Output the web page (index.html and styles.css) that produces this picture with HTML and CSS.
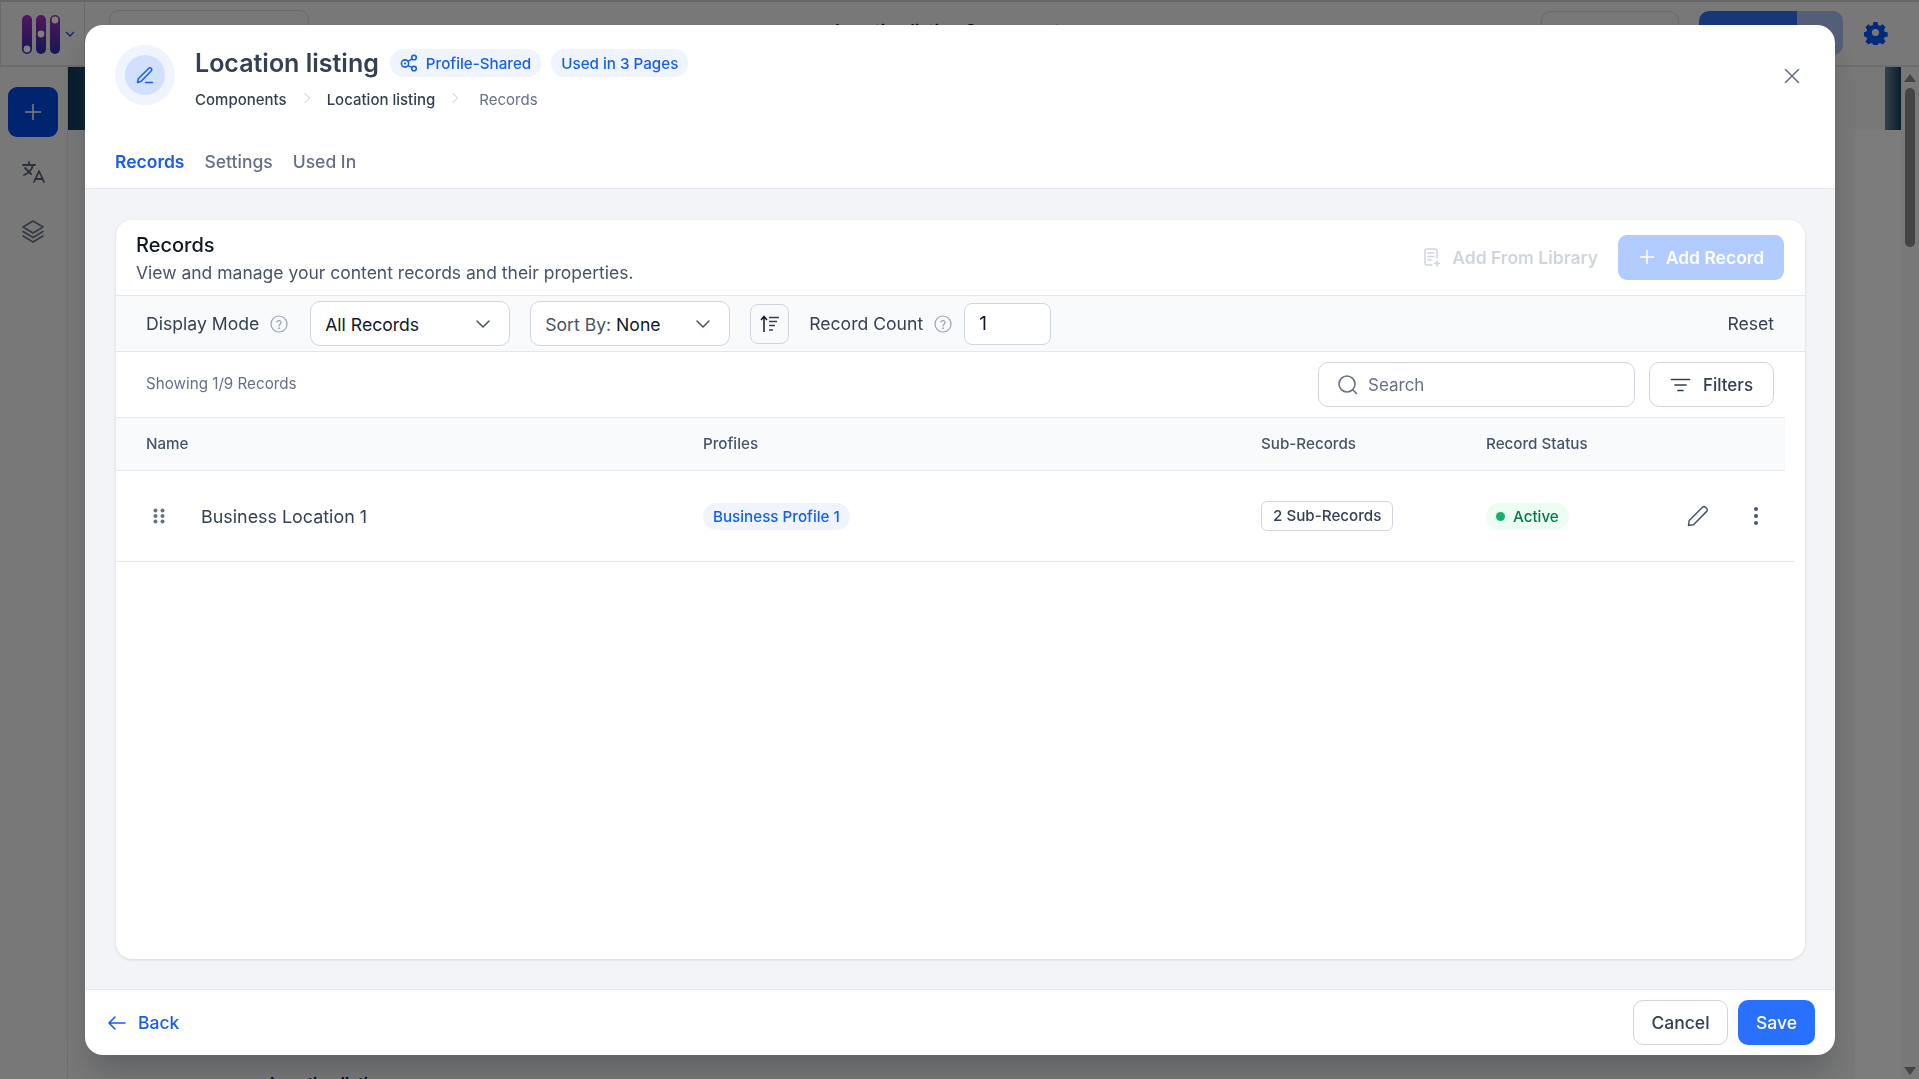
FILE: index.html

```html
<!DOCTYPE html>
<html lang="en">
<head>
<meta charset="UTF-8">
<title>Location listing</title>
<link rel="stylesheet" href="styles.css">
</head>
<body>

<!-- page behind the dialog -->
<div class="page">
  <header class="topbar">
    <div class="brand">
      <svg width="40" height="40" viewBox="0 0 40 40">
        <defs>
          <linearGradient id="pill" x1="0" y1="0" x2="0" y2="1">
            <stop offset="0" stop-color="#a030b8"/>
            <stop offset="1" stop-color="#2c2fa8"/>
          </linearGradient>
        </defs>
        <rect x="1" y="1" width="10" height="39" rx="5" fill="url(#pill)"/>
        <rect x="15" y="1" width="10" height="39" rx="5" fill="url(#pill)"/>
        <rect x="29" y="1" width="10" height="39" rx="5" fill="url(#pill)"/>
        <circle cx="6" cy="35" r="3.4" fill="#fff"/>
        <circle cx="20" cy="20" r="3.4" fill="#fff"/>
        <circle cx="34" cy="6" r="3.4" fill="#fff"/>
      </svg>
      <svg class="brand-caret" width="12" height="12" viewBox="0 0 12 12" fill="none" stroke="#1a4fd0" stroke-width="1.3"><path d="M2 4l4 4 4-4"/></svg>
    </div>
    <div class="top-select"></div>
    <div class="top-title">Location listing Component</div>
    <div class="top-outline"></div>
    <div class="top-publish"><span></span><span></span></div>
    <svg class="top-gear" width="24" height="24" viewBox="0 0 24 24" fill="#0054f4"><path fill-rule="evenodd" d="M10 1.500h4l.6 3 2 .9 2.600-1.600 2.800 2.900-1.600 2.500.8 2 3 .7v4l-3 .7-.8 2 1.600 2.500-2.800 2.900-2.600-1.600-2 .9-.6 3h-4l-.6-3-2-.9-2.600 1.600-2.800-2.900 1.600-2.500-.8-2-3-.7v-4l3-.7.8-2L2 6.700l2.800-2.900 2.600 1.600 2-.9zM12 8.400a3.600 3.600 0 1 0 0 7.200 3.600 3.600 0 0 0 0-7.200z" transform="translate(-.5 -.5)"/></svg>
  </header>
  <div class="page-body">
    <aside class="rail">
      <button class="rail-add">
        <svg width="20" height="20" viewBox="0 0 20 20" stroke="#fff" stroke-width="1.500"><path d="M10 2v16M2 10h16"/></svg>
      </button>
      <svg width="24" height="24" viewBox="1 0 24 24" fill="none" stroke="#5a6270" stroke-width="1.800" stroke-linecap="round" stroke-linejoin="round"><path d="M5 8l6 6M3 5h12M9 2v3M13 5c-1 4-4 8-9 10M14 22l5-11 5 11M15.500 19h7"/></svg>
      <svg width="24" height="24" viewBox="0 0 24 24" fill="none" stroke="#667085" stroke-width="1.600" stroke-linejoin="round" stroke-linecap="round"><path d="M12 2L2 8l10 6 10-6zM2 12.500l10 6 10-6M2 17l10 6 10-6"/></svg>
    </aside>
    <main class="canvas">
      <div class="hero">
        <span class="hero-left"></span>
        <span class="hero-right"></span>
      </div>
      <div class="canvas-row">
        <div class="canvas-main"><span class="canvas-text">Location listing</span></div>
        <div class="canvas-side"></div>
      </div>
    </main>
    <div class="scrollbar">
      <span class="arrow-up"></span>
      <span class="thumb"></span>
      <span class="arrow-down"></span>
    </div>
  </div>
</div>

<div class="overlay"></div>

<!-- dialog -->
<div class="modal">
  <div class="modal-head">
    <div class="head-row">
      <div class="head-icon">
        <span class="head-icon-inner">
          <svg width="20" height="20" viewBox="0 0 20 20" fill="none" stroke="#155eef" stroke-width="1.500" stroke-linecap="round" stroke-linejoin="round"><path d="M2.500 17.500l.8-3.800L13.800 3.200a1.600 1.600 0 0 1 2.300 0l.2.200a1.600 1.600 0 0 1 0 2.300L5.900 16.500zM10.500 17.500h7"/></svg>
        </span>
      </div>
      <div class="head-text">
        <div class="title-row">
          <h1>Location listing</h1>
          <span class="pill pill-icon">
            <svg width="18" height="18" viewBox="0 0 18 18" fill="none" stroke="#155eef" stroke-width="1.600"><circle cx="5" cy="9.500" r="3.600"/><circle cx="5" cy="9.500" r="1.100" fill="#155eef" stroke="none"/><circle cx="14" cy="3.500" r="2.300"/><circle cx="14" cy="14.500" r="2.300"/><path d="M8 7.400l4-2.600M8 11.600l4 2"/></svg>
            Profile-Shared
          </span>
          <span class="pill">Used in 3 Pages</span>
        </div>
        <nav class="crumbs">
          <span>Components</span>
          <svg class="crumb-sep" width="8" height="12" viewBox="0 0 8 12" fill="none" stroke="#c4c8d0" stroke-width="1"><path d="M1.500 1l5 5-5 5"/></svg>
          <span>Location listing</span>
          <svg class="crumb-sep" width="8" height="12" viewBox="0 0 8 12" fill="none" stroke="#c4c8d0" stroke-width="1"><path d="M1.500 1l5 5-5 5"/></svg>
          <span class="crumb-last">Records</span>
        </nav>
      </div>
      <button class="close">
        <svg width="16" height="16" viewBox="0 0 16 16" stroke="#667085" stroke-width="1.600" stroke-linecap="round"><path d="M1.500 1.500l13 13M14.500 1.500l-13 13"/></svg>
      </button>
    </div>
    <div class="tabs">
      <div class="tab active">Records</div>
      <div class="tab">Settings</div>
      <div class="tab">Used In</div>
    </div>
  </div>

  <div class="modal-body">
    <section class="card">
      <div class="card-head">
        <div>
          <h2>Records</h2>
          <p>View and manage your content records and their properties.</p>
        </div>
        <div class="card-actions">
          <span class="lib-link">
            <svg width="18" height="20" viewBox="0 0 18 20" fill="none" stroke="#d0d5dd" stroke-width="1.500" stroke-linecap="round"><path d="M9 18H4a2 2 0 0 1-2-2V4a2 2 0 0 1 2-2h8a2 2 0 0 1 2 2v7M5 6h6M5 9.500h6M5 13h3M14 14v5M11.500 16.500h5"/></svg>
            Add From Library
          </span>
          <button class="btn-add">
            <svg width="14" height="14" viewBox="0 0 14 14" stroke="#fff" stroke-width="1.500"><path d="M7 0v14M0 7h14"/></svg>
            Add Record
          </button>
        </div>
      </div>

      <div class="toolbar">
        <span class="tool-label">Display Mode</span>
        <svg class="help" width="18" height="18" viewBox="0 0 18 18" fill="none" stroke="#98a2b3" stroke-width="1.200"><circle cx="9" cy="9" r="8"/><path d="M6.800 7a2.300 2.300 0 0 1 4.400.6c0 1.500-2.200 1.800-2.200 3.200" stroke-linecap="round"/><circle cx="9" cy="13.200" r=".4"/></svg>
        <div class="select">
          <span>All Records</span>
          <svg width="16" height="16" viewBox="0 0 16 16" fill="none" stroke="#475467" stroke-width="1.500" stroke-linecap="round" stroke-linejoin="round"><path d="M2 5l6 6 6-6"/></svg>
        </div>
        <div class="select select-sort">
          <span><em>Sort By:</em> None</span>
          <svg width="16" height="16" viewBox="0 0 16 16" fill="none" stroke="#475467" stroke-width="1.500" stroke-linecap="round" stroke-linejoin="round"><path d="M2 5l6 6 6-6"/></svg>
        </div>
        <button class="sort-btn">
          <svg width="20" height="18" viewBox="0 0 20 18" fill="none" stroke="#344054" stroke-width="1.500"><path d="M4 17V2M1 5l3-3.500L7 5" stroke="#101828"/><path d="M9 2.500h10M9 6.500h8M9 10.500h6M9 15h4" stroke-width="1.300"/></svg>
        </button>
        <span class="tool-label tool-count">Record Count</span>
        <svg class="help" width="18" height="18" viewBox="0 0 18 18" fill="none" stroke="#98a2b3" stroke-width="1.200"><circle cx="9" cy="9" r="8"/><path d="M6.800 7a2.300 2.300 0 0 1 4.400.6c0 1.500-2.200 1.800-2.200 3.200" stroke-linecap="round"/><circle cx="9" cy="13.200" r=".4"/></svg>
        <div class="count-input">1</div>
        <span class="reset">Reset</span>
      </div>

      <div class="search-row">
        <span class="showing">Showing 1/9 Records</span>
        <div class="search">
          <svg width="21" height="21" viewBox="0 0 21 21" fill="none" stroke="#667085" stroke-width="1.600" stroke-linecap="round"><circle cx="10" cy="10" r="8"/><path d="M16 16l3.500 3.500"/></svg>
          <span>Search</span>
        </div>
        <button class="filters">
          <svg width="21" height="14" viewBox="0 0 20 14" stroke="#344054" stroke-width="1.700" stroke-linecap="round"><path d="M1 1.500h18M4.500 7h11M7.500 12.500h5"/></svg>
          Filters
        </button>
      </div>

      <div class="table-head">
        <span>Name</span>
        <span>Profiles</span>
        <span>Sub-Records</span>
        <span>Record Status</span>
      </div>
      <div class="table-row">
        <div class="cell-name">
          <svg width="12" height="16" viewBox="0 0 12 16" fill="#667085"><circle cx="2.500" cy="2.500" r="2"/><circle cx="9.500" cy="2.500" r="2"/><circle cx="2.500" cy="8" r="2"/><circle cx="9.500" cy="8" r="2"/><circle cx="2.500" cy="13.500" r="2"/><circle cx="9.500" cy="13.500" r="2"/></svg>
          <span>Business Location 1</span>
        </div>
        <div><span class="tag-blue">Business Profile 1</span></div>
        <div><span class="tag-outline">2 Sub-Records</span></div>
        <div class="cell-status">
          <span class="tag-green"><i></i>Active</span>
          <svg class="icon-edit" width="22" height="22" viewBox="0 0 22 22" fill="none" stroke="#475467" stroke-width="1.500" stroke-linejoin="round"><path d="M1.500 20.500l.7-5L15.500 2.200a2 2 0 0 1 2.900 0l1.300 1.300a2 2 0 0 1 0 2.900L6.500 19.800z"/></svg>
          <svg class="icon-more" width="4" height="18" viewBox="0 0 4 18" fill="#475467"><circle cx="2" cy="2" r="2"/><circle cx="2" cy="9" r="2"/><circle cx="2" cy="16" r="2"/></svg>
        </div>
      </div>
    </section>
  </div>

  <div class="modal-foot">
    <button class="back">
      <svg width="18" height="14" viewBox="0 0 18 14" fill="none" stroke="#155eef" stroke-width="1.600" stroke-linecap="round" stroke-linejoin="round"><path d="M17 7H1M7 1L1 7l6 6"/></svg>
      Back
    </button>
    <div class="foot-actions">
      <button class="btn-cancel">Cancel</button>
      <button class="btn-save">Save</button>
    </div>
  </div>
</div>

</body>
</html>
```

FILE: styles.css

```css
* {
  box-sizing: border-box;
}

html, body {
  height: 100%;
}

body {
  margin: 0;
  overflow: hidden;
  background: #f0f0f0;
  color: #344054;
  font-family: 'Inter', 'Liberation Sans', sans-serif;
}

button {
  font-family: inherit;
  cursor: pointer;
}

/* page behind */
.page {
  height: 100%;
  display: flex;
  flex-direction: column;
}

.topbar {
  height: 67px;
  display: flex;
  align-items: flex-start;
  border-top: 2px solid #ccc;
  border-bottom: 2px solid #dcdcdc;
  background: #f0f0f0;
}

.brand {
  width: 85px;
  height: 65px;
  flex: none;
  display: flex;
  align-items: center;
  gap: 3px;
  padding: 0 0 0 20px;
  border: 1px solid #d4d4d4;
  border-top: none;
}

.top-select {
  width: 200px;
  height: 44px;
  flex: none;
  margin: 8px 0 0 24px;
  border: 1px solid #d0d5dd;
  border-radius: 10px;
}

.top-title {
  flex: 1;
  margin: 19px 0 0 526px;
  font-size: 17px;
  font-weight: 600;
  color: #101828;
}

.top-outline {
  width: 138px;
  height: 44px;
  flex: none;
  margin: 9px 0 0 2px;
  border: 1px solid #d0d5dd;
  border-radius: 10px;
}

.top-publish {
  width: 144px;
  height: 44px;
  flex: none;
  margin: 9px 0 0 20px;
  display: flex;
  border-radius: 10px;
  overflow: hidden;
}

.top-publish span:first-child {
  width: 98px;
  background: #2c6ff0;
}

.top-publish span:last-child {
  flex: 1;
  background: #a8bcf0;
}

.top-gear {
  flex: none;
  margin: 19px 31px 0 21px;
}

.page-body {
  flex: 1;
  display: flex;
  min-height: 0;
}

.rail {
  width: 68px;
  flex: none;
  display: flex;
  flex-direction: column;
  align-items: center;
  gap: 35px;
  padding-top: 20px;
  padding-right: 2px;
  border-right: 1px solid #dcdcdc;
}

.rail-add {
  width: 50px;
  height: 50px;
  margin-bottom: -12px;
  display: flex;
  align-items: center;
  justify-content: center;
  border: none;
  border-radius: 9px;
  background: #0048e0;
}

.canvas {
  flex: 1;
  display: flex;
  flex-direction: column;
}

.hero {
  height: 63px;
  display: flex;
  justify-content: space-between;
}

.hero-left {
  width: 80px;
  background: linear-gradient(90deg, #123a5c, #3a6a8a);
}

.hero-right {
  width: 16px;
  background: linear-gradient(90deg, #6a8494, #123a5c);
}

.canvas-row {
  flex: 1;
  display: flex;
}

.canvas-main {
  flex: 1;
  position: relative;
  overflow: hidden;
}

.canvas-text {
  position: absolute;
  left: 202px;
  bottom: -14px;
  font-size: 16px;
  font-weight: 600;
  color: #101828;
}

.canvas-side {
  width: 46px;
  background: #f6f6f6;
}

.scrollbar {
  width: 18px;
  flex: none;
  display: flex;
  flex-direction: column;
  align-items: center;
  padding: 7px 0 4px;
}

.arrow-up,
.arrow-down {
  width: 0;
  height: 0;
  border-left: 6px solid transparent;
  border-right: 6px solid transparent;
}

.arrow-up {
  border-bottom: 8px solid #888;
}

.arrow-down {
  margin-top: auto;
  border-top: 8px solid #888;
}

.thumb {
  width: 10px;
  height: 159px;
  margin-top: 6px;
  border-radius: 5px;
  background: #888;
}

.overlay {
  position: fixed;
  inset: 0;
  background: rgba(0, 0, 0, 0.5);
}

/* dialog */
.modal {
  position: fixed;
  left: 85px;
  top: 25px;
  width: 1750px;
  height: 1030px;
  display: flex;
  flex-direction: column;
  overflow: hidden;
  background: #fff;
  border-radius: 18px;
  box-shadow: 0 20px 30px -6px rgba(16, 24, 40, 0.25);
}

.modal-head {
  flex: none;
  height: 164px;
  padding: 20px 30px 0;
  border-bottom: 1px solid #e4e7ec;
}

.head-row {
  display: flex;
  align-items: flex-start;
}

.head-icon {
  width: 60px;
  height: 60px;
  flex: none;
  display: flex;
  align-items: center;
  justify-content: center;
  border-radius: 50%;
  background: #eff4ff;
}

.head-icon-inner {
  width: 40px;
  height: 40px;
  display: flex;
  align-items: center;
  justify-content: center;
  border-radius: 50%;
  background: #d1e0ff;
}

.head-text {
  flex: 1;
  margin-left: 20px;
  padding-top: 4px;
}

.title-row {
  display: flex;
  align-items: center;
  gap: 10px;
  height: 28px;
}

h1 {
  margin: 0 1px 0 0;
  font-size: 25px;
  font-weight: 600;
  line-height: 28px;
  color: #344054;
}

.pill {
  height: 28px;
  display: inline-flex;
  align-items: center;
  gap: 8px;
  padding: 0 10px;
  border-radius: 14px;
  background: #eff4ff;
  color: #155eef;
  font-size: 15.200px;
  font-weight: 500;
}

.crumbs {
  display: flex;
  align-items: center;
  margin-top: 13px;
  font-size: 15px;
  font-weight: 500;
  line-height: 20px;
  color: #344054;
}

.crumb-sep {
  margin: -4px 16px 0;
}

.crumb-last {
  margin-left: 4px;
  font-weight: 400;
  color: #667085;
}

.close {
  margin: 23px 5px 0 0;
  padding: 0;
  display: flex;
  border: none;
  background: none;
}

.tabs {
  display: flex;
  gap: 20px;
  margin-top: 38px;
}

.tab {
  height: 46px;
  padding-top: 4px;
  font-size: 17.500px;
  font-weight: 500;
  line-height: 20px;
  color: #667085;
  border-bottom: 3px solid transparent;
}

.tab.active {
  color: #155eef;
  font-weight: 600;
  border-bottom-color: #155eef;
}

.modal-body {
  flex: 1;
  min-height: 0;
  padding: 31px 30px 30px 31px;
  background: #f2f4f7;
}

.card {
  height: 100%;
  overflow: hidden;
  background: #fff;
  border-radius: 16px;
  box-shadow: 0 1px 3px rgba(16, 24, 40, 0.12);
}

.card-head {
  height: 76px;
  display: flex;
  align-items: center;
  justify-content: space-between;
  padding: 3px 21px 0 20px;
  border-bottom: 1px solid #e4e7ec;
}

h2 {
  margin: 0 0 4px;
  font-size: 20px;
  font-weight: 500;
  line-height: 24px;
  color: #101828;
}

.card-head p {
  margin: 0;
  font-size: 17.500px;
  line-height: 24px;
  color: #475467;
}

.card-actions {
  display: flex;
  align-items: center;
  gap: 20px;
  margin-top: -4px;
}

.lib-link {
  display: flex;
  align-items: center;
  gap: 11px;
  font-size: 17.500px;
  font-weight: 600;
  color: #d0d5dd;
}

.btn-add {
  width: 166px;
  height: 45px;
  display: flex;
  align-items: center;
  justify-content: center;
  gap: 12px;
  padding-left: 8px;
  border: none;
  border-radius: 9px;
  background: #b2ccff;
  color: #fff;
  font-size: 17.500px;
  font-weight: 600;
}

.toolbar {
  height: 56px;
  display: flex;
  align-items: center;
  padding: 0 31px 0 30px;
  background: #f9fafb;
  border-bottom: 1px solid #e4e7ec;
  font-size: 17.600px;
}

.tool-label {
  color: #344054;
}

.help {
  margin-left: 11px;
  flex: none;
}

.select {
  width: 200px;
  height: 45px;
  flex: none;
  display: flex;
  align-items: center;
  justify-content: space-between;
  margin-left: 22px;
  padding: 1px 18px 0 14px;
  background: #fff;
  border: 1px solid #d0d5dd;
  border-radius: 10px;
  color: #101828;
}

.select-sort {
  margin-left: 20px;
}

.select em {
  font-style: normal;
  color: #475467;
}

.sort-btn {
  width: 39px;
  height: 40px;
  flex: none;
  margin-left: 20px;
  padding: 0;
  display: flex;
  align-items: center;
  justify-content: center;
  background: #f9fafb;
  border: 1px solid #d0d5dd;
  border-radius: 8px;
}

.tool-count {
  margin-left: 20px;
}

.count-input {
  width: 87px;
  height: 42px;
  margin-left: 12px;
  padding: 0 14px;
  display: flex;
  align-items: center;
  background: #fff;
  border: 1px solid #d0d5dd;
  border-radius: 8px;
  font-size: 19px;
  color: #101828;
}

.reset {
  margin-left: auto;
  color: #344054;
}

.search-row {
  height: 65px;
  display: flex;
  align-items: center;
  padding: 0 31px 0 30px;
}

.showing {
  margin-right: auto;
  margin-bottom: 2px;
  font-size: 15.200px;
  color: #667085;
}

.search {
  width: 317px;
  height: 45px;
  display: flex;
  align-items: center;
  gap: 10px;
  padding: 0 18px;
  border: 1px solid #d0d5dd;
  border-radius: 10px;
  font-size: 17px;
  color: #667085;
}

.filters {
  width: 125px;
  height: 45px;
  display: flex;
  align-items: center;
  justify-content: center;
  gap: 12px;
  margin-left: 14px;
  background: #fff;
  border: 1px solid #d0d5dd;
  border-radius: 10px;
  font-size: 17px;
  font-weight: 500;
  color: #344054;
}

.table-head,
.table-row {
  display: grid;
  grid-template-columns: 557px 558px 225px 1fr;
  align-items: center;
  padding-left: 30px;
}

.table-head {
  height: 54px;
  width: 1669px;
  padding-bottom: 2px;
  background: #f9fafb;
  border-top: 1px solid #e4e7ec;
  border-bottom: 1px solid #e4e7ec;
  font-size: 15.200px;
  font-weight: 500;
  color: #475467;
}

.table-row {
  height: 91px;
  width: 1678px;
  border-bottom: 1px solid #e4e7ec;
  font-size: 15.200px;
}

.cell-name {
  display: flex;
  align-items: center;
  gap: 36px;
  padding-left: 7px;
  font-size: 17.900px;
  color: #344054;
}

.tag-blue {
  display: inline-block;
  padding: 0 10px;
  line-height: 27px;
  border-radius: 14px;
  background: #eff4ff;
  color: #155eef;
  font-weight: 500;
}

.tag-outline {
  display: inline-block;
  padding: 0 11px;
  line-height: 28px;
  border: 1px solid #d0d5dd;
  border-radius: 6px;
  color: #344054;
  font-weight: 500;
}

.cell-status {
  display: flex;
  align-items: center;
}

.tag-green {
  width: 83px;
  flex: none;
  display: inline-flex;
  align-items: center;
  gap: 8px;
  height: 27px;
  padding: 0 10px;
  border-radius: 14px;
  background: #ecfdf3;
  color: #067647;
  font-weight: 500;
}

.tag-green i {
  width: 9px;
  height: 9px;
  border-radius: 50%;
  background: #17b26a;
}

.icon-edit {
  margin-left: 118px;
}

.icon-more {
  margin-left: 45px;
}

.modal-foot {
  flex: none;
  height: 66px;
  display: flex;
  align-items: center;
  justify-content: space-between;
  padding: 0 20px 0 23px;
  border-top: 1px solid #e4e7ec;
}

.back {
  display: flex;
  align-items: center;
  gap: 12px;
  padding: 0;
  border: none;
  background: none;
  color: #155eef;
  font-size: 17.500px;
  font-weight: 500;
}

.foot-actions {
  display: flex;
  gap: 10px;
}

.btn-cancel,
.btn-save {
  height: 45px;
  border-radius: 10px;
  font-size: 17.500px;
  font-weight: 500;
}

.btn-cancel {
  width: 95px;
  background: #fff;
  border: 1px solid #d0d5dd;
  color: #344054;
}

.btn-save {
  width: 77px;
  background: #2970ff;
  border: none;
  color: #fff;
}
```
